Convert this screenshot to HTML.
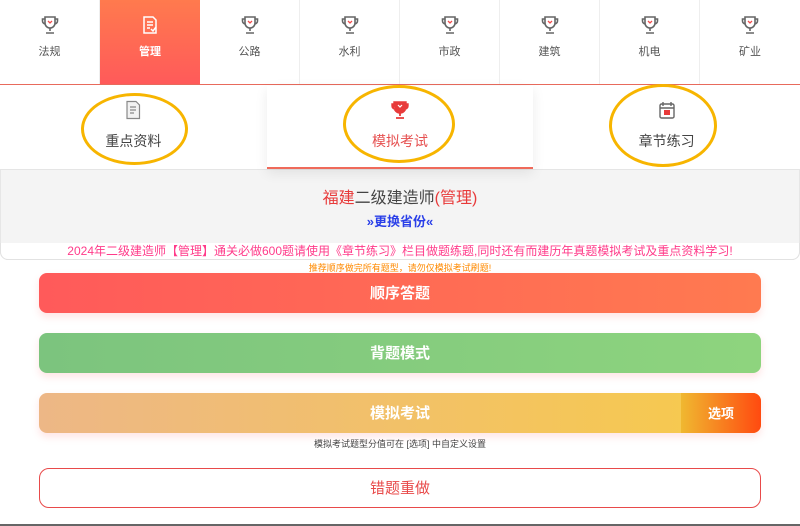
<!DOCTYPE html>
<html><head><meta charset="utf-8"><style>
*{margin:0;padding:0;box-sizing:border-box}
body{width:800px;height:526px;overflow:hidden;background:#fff;font-family:"Liberation Sans","Noto Sans CJK SC",sans-serif;position:relative}
.tabs{position:absolute;top:0;left:0;width:800px;height:85px;border-bottom:1px solid #e86a5c;display:flex}
.tab{width:100px;height:84px;border-right:1px solid #eee;text-align:center;font-size:11px;color:#555;position:relative}
.tab svg{position:absolute;left:41px;top:15px}
.tab span{position:absolute;top:43px;left:0;width:100%}
.tab.act{background:linear-gradient(180deg,#ff7a4e,#ff5a5a);color:#fff;font-weight:bold;border-right:none}
.sub{position:absolute;top:86px;left:0;width:800px;height:84px;display:flex;border-bottom:1px solid #e5e5e5}
.s{flex:1;text-align:center;position:relative;font-size:14px;color:#444}
.s.mid{background:#fff;box-shadow:0 4px 12px rgba(0,0,0,.08);border-bottom:2px solid #ef6a5a;color:#e65050;z-index:2}
.s span{position:absolute;top:45px;left:0;width:100%}
.s svg{position:absolute;left:50%;margin-left:-9px;top:14px}
.gray{position:absolute;top:170px;left:0;width:800px;height:90px;background:#f4f4f4;border-radius:0 0 8px 8px;border:1px solid #e6e6e6;border-top:none}
.gwhite{position:absolute;top:243px;left:0;width:800px;height:17px;background:#fff;border-radius:0 0 8px 8px;border:1px solid #e2e2e2;border-top:none}
.btn{position:absolute;left:39px;width:722px;height:40px;border-radius:8px;color:#fff;font-size:15px;font-weight:bold;text-align:center;line-height:42px;box-shadow:0 4px 8px rgba(255,120,120,.2)}
.ell{position:absolute;border:3px solid #f7b500;border-radius:50%;z-index:5}
</style></head><body>
<div class="tabs">
<div class="tab"><svg width="18" height="20" viewBox="0 0 18 20"><path d="M4 2h10v6a5 5 0 0 1-10 0z M4 4H1.5v2a3 3 0 0 0 3 3 M14 4h2.5v2a3 3 0 0 1-3 3 M9 13v3 M5 18h8" fill="none" stroke="#666" stroke-width="1.6"/><path d="M7 6l2 2 2-2" stroke="#f04a4a" stroke-width="1.3" fill="none"/></svg><span>法规</span></div>
<div class="tab act"><svg width="18" height="20" viewBox="0 0 18 20"><path d="M3 2h9l3 3v13H3z M6 7h6 M6 10h6 M6 13h3 M10 14l2 2 3-4" fill="none" stroke="#fff" stroke-width="1.5"/></svg><span>管理</span></div>
<div class="tab"><svg width="18" height="20" viewBox="0 0 18 20"><path d="M4 2h10v6a5 5 0 0 1-10 0z M4 4H1.5v2a3 3 0 0 0 3 3 M14 4h2.5v2a3 3 0 0 1-3 3 M9 13v3 M5 18h8" fill="none" stroke="#666" stroke-width="1.6"/><path d="M7 6l2 2 2-2" stroke="#f04a4a" stroke-width="1.3" fill="none"/></svg><span>公路</span></div>
<div class="tab"><svg width="18" height="20" viewBox="0 0 18 20"><path d="M4 2h10v6a5 5 0 0 1-10 0z M4 4H1.5v2a3 3 0 0 0 3 3 M14 4h2.5v2a3 3 0 0 1-3 3 M9 13v3 M5 18h8" fill="none" stroke="#666" stroke-width="1.6"/><path d="M7 6l2 2 2-2" stroke="#f04a4a" stroke-width="1.3" fill="none"/></svg><span>水利</span></div>
<div class="tab"><svg width="18" height="20" viewBox="0 0 18 20"><path d="M4 2h10v6a5 5 0 0 1-10 0z M4 4H1.5v2a3 3 0 0 0 3 3 M14 4h2.5v2a3 3 0 0 1-3 3 M9 13v3 M5 18h8" fill="none" stroke="#666" stroke-width="1.6"/><path d="M7 6l2 2 2-2" stroke="#f04a4a" stroke-width="1.3" fill="none"/></svg><span>市政</span></div>
<div class="tab"><svg width="18" height="20" viewBox="0 0 18 20"><path d="M4 2h10v6a5 5 0 0 1-10 0z M4 4H1.5v2a3 3 0 0 0 3 3 M14 4h2.5v2a3 3 0 0 1-3 3 M9 13v3 M5 18h8" fill="none" stroke="#666" stroke-width="1.6"/><path d="M7 6l2 2 2-2" stroke="#f04a4a" stroke-width="1.3" fill="none"/></svg><span>建筑</span></div>
<div class="tab"><svg width="18" height="20" viewBox="0 0 18 20"><path d="M4 2h10v6a5 5 0 0 1-10 0z M4 4H1.5v2a3 3 0 0 0 3 3 M14 4h2.5v2a3 3 0 0 1-3 3 M9 13v3 M5 18h8" fill="none" stroke="#666" stroke-width="1.6"/><path d="M7 6l2 2 2-2" stroke="#f04a4a" stroke-width="1.3" fill="none"/></svg><span>机电</span></div>
<div class="tab" style="border-right:none"><svg width="18" height="20" viewBox="0 0 18 20"><path d="M4 2h10v6a5 5 0 0 1-10 0z M4 4H1.5v2a3 3 0 0 0 3 3 M14 4h2.5v2a3 3 0 0 1-3 3 M9 13v3 M5 18h8" fill="none" stroke="#666" stroke-width="1.6"/><path d="M7 6l2 2 2-2" stroke="#f04a4a" stroke-width="1.3" fill="none"/></svg><span>矿业</span></div>
</div>
<div class="gray"></div>
<div class="gwhite"></div>
<div class="sub">
<div class="s"><svg width="18" height="20" viewBox="0 0 18 20"><path d="M3 1.5h9l3.5 3.5v13.5H3z" fill="#f2f2f2" stroke="#888" stroke-width="1.2"/><path d="M6 7h6M6 10h6M6 13h4" stroke="#888" stroke-width="1.2"/></svg><span>重点资料</span></div>
<div class="s mid"><svg width="18" height="20" viewBox="0 0 18 20"><path d="M3 2h12v5a6 6 0 0 1-12 0z M3 4H1v2a3 3 0 0 0 3 3 M15 4h2v2a3 3 0 0 1-3 3" fill="#e83a3a" stroke="#e83a3a" stroke-width="1.4"/><path d="M9 13v3 M5 18h8" stroke="#e83a3a" stroke-width="1.8"/><path d="M7 5l2 2 2-2" stroke="#fff" stroke-width="1.2" fill="none"/></svg><span>模拟考试</span></div>
<div class="s"><svg width="18" height="20" viewBox="0 0 18 20"><rect x="2" y="4" width="14" height="14" rx="1.5" fill="none" stroke="#666" stroke-width="1.4"/><path d="M5 2v4M13 2v4M2 8h14" stroke="#666" stroke-width="1.4"/><rect x="6" y="10" width="6" height="5" fill="#e83a3a"/></svg><span>章节练习</span></div>
</div>
<div style="position:absolute;top:184px;width:800px;text-align:center;font-size:16px;color:#444"><span style="color:#e83a3a">福建</span>二级建造师<span style="color:#e83a3a">(管理)</span></div>
<div style="position:absolute;top:211px;width:800px;text-align:center;font-size:13px;color:#2a3fe8;font-weight:bold">»更换省份«</div>
<div style="position:absolute;top:242px;width:800px;text-align:center;font-size:12px;color:#ff3b8a;white-space:nowrap">2024年二级建造师【管理】通关必做600题请使用《章节练习》栏目做题练题,同时还有而建历年真题模拟考试及重点资料学习!</div>
<div style="position:absolute;top:261px;width:800px;text-align:center;font-size:9px;color:#ff8a00">推荐顺序做完所有题型，请勿仅模拟考试刷题!</div>
<div class="btn" style="top:273px;background:linear-gradient(90deg,#ff5a5a,#ff7a50)">顺序答题</div>
<div class="btn" style="top:333px;background:linear-gradient(90deg,#7cc47e,#8ed47e)">背题模式</div>
<div class="btn" style="top:393px;background:linear-gradient(90deg,#edb786,#f7cb4a);overflow:hidden">模拟考试<div style="position:absolute;right:0;top:0;width:80px;height:40px;background:linear-gradient(90deg,#f0b830,#ff4a10);font-size:13px">选项</div></div>
<div style="position:absolute;top:437px;width:800px;text-align:center;font-size:9px;color:#444">模拟考试题型分值可在 [选项] 中自定义设置</div>
<div style="position:absolute;left:39px;top:468px;width:722px;height:40px;border:1px solid #e84a4a;border-radius:10px;text-align:center;line-height:40px;color:#e84a4a;font-size:15px">错题重做</div>
<div style="position:absolute;left:0;top:524px;width:800px;height:2px;background:#666"></div>
<div class="ell" style="left:81px;top:93px;width:107px;height:72px"></div>
<div class="ell" style="left:343px;top:85px;width:112px;height:78px"></div>
<div class="ell" style="left:609px;top:84px;width:108px;height:83px"></div>
</body></html>
